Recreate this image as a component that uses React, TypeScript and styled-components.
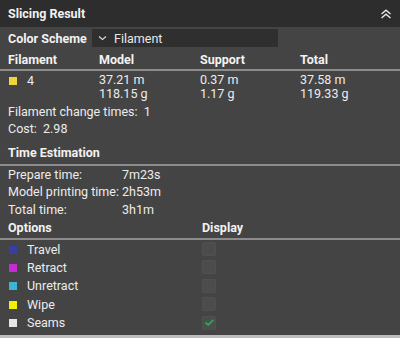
import React from "react";
import styled, { createGlobalStyle } from "styled-components";

const Global = createGlobalStyle`
  html, body { margin: 0; padding: 0; background: #444444; }
  body { font-family: Roboto, "Noto Sans", sans-serif; }
`;

const Panel = styled.div`
  width: 400px;
  height: 338px;
  background: #444444;
  color: #ececec;
  font-size: 12.5px;
  display: flex;
  flex-direction: column;
  box-sizing: border-box;
  border-bottom: 3px solid #bdbdbd;
  overflow: hidden;
  white-space: nowrap;
`;

const Header = styled.div`
  height: 27px;
  background: #2d2d2d;
  display: flex;
  align-items: center;
  justify-content: space-between;
  padding: 0 8px 0 8px;
  flex-shrink: 0;
`;

const Title = styled.div`
  font-weight: 700;
  font-size: 12.5px;
  color: #f2f2f2;
`;

const Body = styled.div`
  padding: 0 0 0 8px;
  display: flex;
  flex-direction: column;
`;

const SchemeRow = styled.div`
  display: flex;
  align-items: center;
  height: 22px;
`;

const Label = styled.div`
  font-weight: 700;
  color: #f2f2f2;
  width: 84px;
`;

const Select = styled.div`
  width: 186px;
  height: 18px;
  background: #2f2f2f;
  display: flex;
  align-items: center;
  padding-left: 6px;
  box-sizing: border-box;
  gap: 7px;
  color: #e8e8e8;
`;

const Grid = styled.div<{ $cols: string }>`
  display: grid;
  grid-template-columns: ${(p) => p.$cols};
  align-items: center;
`;

const HeadRow = styled(Grid)`
  height: 20px;
  font-weight: 700;
  color: #f2f2f2;
`;

const Rule = styled.div`
  height: 2px;
  background: #8c8c8c;
  margin-left: -8px;
`;

const Cell = styled.div`
  line-height: 15px;
`;

const Stack = styled.div`
  display: flex;
  flex-direction: column;
  line-height: 14.5px;
`;

const DataRow = styled(Grid)`
  align-items: start;
  padding-top: 1.5px;
  height: 32px;
  box-sizing: border-box;
`;

const Line = styled.div`
  height: 17px;
  display: flex;
  align-items: center;
`;

const Swatch = styled.span<{ $c: string }>`
  display: inline-block;
  width: 8px;
  height: 8px;
  background: ${(p) => p.$c};
  margin-right: 10px;
  margin-left: 1px;
`;

const OptRow = styled(Grid)`
  height: 18.4px;
`;

const Check = styled.div`
  width: 14px;
  height: 14px;
  border-radius: 2px;
  background: #4c4c4c;
  box-shadow: inset 0 0 0 1px #505050;
  display: flex;
  align-items: center;
  justify-content: center;
`;

const SectionHead = styled.div`
  height: 24px;
  margin-top: 3px;
  display: flex;
  align-items: center;
  font-weight: 700;
  color: #f2f2f2;
`;

const TimeRow = styled(Grid)`
  height: 17.3px;
`;

const options = [
  { name: "Travel", color: "#3a3ea4", on: false },
  { name: "Retract", color: "#c42dcf", on: false },
  { name: "Unretract", color: "#3fb3d3", on: false },
  { name: "Wipe", color: "#f2f200", on: false },
  { name: "Seams", color: "#e6e6e6", on: true },
];

function Pair({ a, b }: { a: string; b: string }) {
  return (
    <Stack>
      <span>{a}</span>
      <span>{b}</span>
    </Stack>
  );
}

export default function App() {
  return (
    <>
      <Global />
      <Panel>
        <Header>
          <Title>Slicing Result</Title>
          <svg width="12" height="10" viewBox="0 0 12 10">
            <path d="M1.5 5 L6 1.2 L10.5 5" fill="none" stroke="#e8e8e8" strokeWidth="1.4" />
            <path d="M1.5 9 L6 5.2 L10.5 9" fill="none" stroke="#e8e8e8" strokeWidth="1.4" />
          </svg>
        </Header>
        <Body>
          <SchemeRow>
            <Label>Color Scheme</Label>
            <Select>
              <svg width="9" height="6" viewBox="0 0 9 6">
                <path d="M1 1.5 L4.5 4.5 L8 1.5" fill="none" stroke="#dcdcdc" strokeWidth="1.1" />
              </svg>
              Filament
            </Select>
          </SchemeRow>
          <HeadRow $cols="91px 101px 100px 1fr">
            <div>Filament</div>
            <div>Model</div>
            <div>Support</div>
            <div>Total</div>
          </HeadRow>
          <Rule />
          <DataRow $cols="91px 101px 100px 1fr">
            <Cell>
              <Swatch $c="#f3d33c" />4
            </Cell>
            <Pair a="37.21 m" b="118.15 g" />
            <Pair a="0.37 m" b="1.17 g" />
            <Pair a="37.58 m" b="119.33 g" />
          </DataRow>
          <Line>Filament change times:&nbsp; 1</Line>
          <Line>Cost:&nbsp; 2.98</Line>
          <SectionHead>Time Estimation</SectionHead>
          <Rule />
          <TimeRow $cols="114px 1fr">
            <div>Prepare time:</div>
            <div>7m23s</div>
          </TimeRow>
          <TimeRow $cols="114px 1fr">
            <div>Model printing time:</div>
            <div>2h53m</div>
          </TimeRow>
          <TimeRow $cols="114px 1fr">
            <div>Total time:</div>
            <div>3h1m</div>
          </TimeRow>
          <HeadRow $cols="194px 1fr">
            <div>Options</div>
            <div>Display</div>
          </HeadRow>
          <Rule />
          {options.map((o) => (
            <OptRow key={o.name} $cols="194px 1fr">
              <Cell>
                <Swatch $c={o.color} />
                {o.name}
              </Cell>
              <Check>
                {o.on && (
                  <svg width="11" height="9" viewBox="0 0 11 9">
                    <path d="M1.5 4.5 L4.2 7 L9.5 1.8" fill="none" stroke="#1fae4f" strokeWidth="1.8" />
                  </svg>
                )}
              </Check>
            </OptRow>
          ))}
        </Body>
      </Panel>
    </>
  );
}
